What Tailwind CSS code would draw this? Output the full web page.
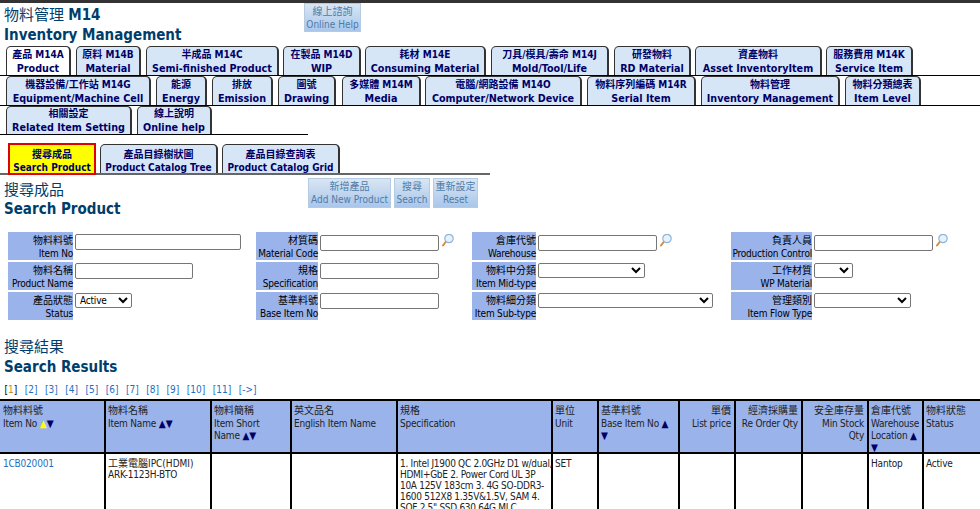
<!DOCTYPE html>
<html lang="en">
<head>
    <meta charset="UTF-8">
    <meta name="viewport" content="width=device-width, initial-scale=1.0">
    <title>Inventory Management</title>
    <script src="https://cdn.jsdelivr.net/npm/@tailwindcss/browser@4"></script>
</head>
<body class="h-[509px] overflow-hidden bg-white font-['DejaVu_Sans_Condensed','Noto_Sans_CJK_TC',sans-serif] text-[10px] leading-[13px] tracking-[-0.2px] text-black">

    <div class="h-[3px] bg-[#333333]"></div>

    <!-- Page title -->
    <header class="relative h-[43px] pl-[4px] pt-[2px] text-[15px] leading-[20px] tracking-normal text-[#003d6b]">
        <div>物料管理 <b>M14</b></div>
        <div class="font-bold">Inventory Management</div>
        <button class="absolute left-[304px] top-0 h-[29px] w-[57px] whitespace-nowrap border border-[#b5cbe2] bg-gradient-to-b from-[#d9e6f3] to-[#a9c6ea] text-[10px] leading-[13px] text-[#4f7ba8]">線上諮詢<br>Online Help</button>
    </header>

    <!-- Main tabs -->
    <nav class="whitespace-nowrap text-[10.7px] font-bold leading-[14px] tracking-normal text-[#000066]">
        <div class="flex h-[30px] items-end border-b border-black pl-[6px]">
            <a class="mr-[5px] h-[29px] w-[65px] rounded-t-[5px] border border-b-0 border-r-2 border-[#333333] bg-white pt-[1px] text-center first-line:text-[10px]">產品 M14A<br>Product</a>
            <a class="mr-[5px] h-[29px] w-[65px] rounded-t-[5px] border border-b-0 border-r-2 border-[#333333] bg-[#d6e6f7] pt-[1px] text-center first-line:text-[10px]">原料 M14B<br>Material</a>
            <a class="mr-[4px] h-[29px] w-[133px] rounded-t-[5px] border border-b-0 border-r-2 border-[#333333] bg-[#d6e6f7] pt-[1px] text-center first-line:text-[10px]">半成品 M14C<br>Semi-finished Product</a>
            <a class="mr-[4px] h-[29px] w-[78px] rounded-t-[5px] border border-b-0 border-r-2 border-[#333333] bg-[#d6e6f7] pt-[1px] text-center first-line:text-[10px]">在製品 M14D<br>WIP</a>
            <a class="mr-[5px] h-[29px] w-[121px] rounded-t-[5px] border border-b-0 border-r-2 border-[#333333] bg-[#d6e6f7] pt-[1px] text-center first-line:text-[10px]">耗材 M14E<br>Consuming Material</a>
            <a class="mr-[5px] h-[29px] w-[118px] rounded-t-[5px] border border-b-0 border-r-2 border-[#333333] bg-[#d6e6f7] pt-[1px] text-center first-line:text-[10px]">刀具/模具/壽命 M14J<br>Mold/Tool/Life</a>
            <a class="mr-[4px] h-[29px] w-[77px] rounded-t-[5px] border border-b-0 border-r-2 border-[#333333] bg-[#d6e6f7] pt-[1px] text-center first-line:text-[10px]">研發物料<br>RD Material</a>
            <a class="mr-[4px] h-[29px] w-[127px] rounded-t-[5px] border border-b-0 border-r-2 border-[#333333] bg-[#d6e6f7] pt-[1px] text-center first-line:text-[10px]">資產物料<br>Asset InventoryItem</a>
            <a class="h-[29px] w-[87px] rounded-t-[5px] border border-b-0 border-r-2 border-[#333333] bg-[#d6e6f7] pt-[1px] text-center first-line:text-[10px]">服務費用 M14K<br>Service Item</a>
        </div>
        <div class="flex h-[30px] items-end border-b border-black pl-[6px]">
            <a class="mr-[5px] h-[29px] w-[145px] rounded-t-[5px] border border-b-0 border-r-2 border-[#333333] bg-[#d6e6f7] pt-[1px] text-center first-line:text-[10px]">機器設備/工作站 M14G<br>Equipment/Machine Cell</a>
            <a class="mr-[5px] h-[29px] w-[51px] rounded-t-[5px] border border-b-0 border-r-2 border-[#333333] bg-[#d6e6f7] pt-[1px] text-center first-line:text-[10px]">能源<br>Energy</a>
            <a class="mr-[5px] h-[29px] w-[61px] rounded-t-[5px] border border-b-0 border-r-2 border-[#333333] bg-[#d6e6f7] pt-[1px] text-center first-line:text-[10px]">排放<br>Emission</a>
            <a class="mr-[6px] h-[29px] w-[58px] rounded-t-[5px] border border-b-0 border-r-2 border-[#333333] bg-[#d6e6f7] pt-[1px] text-center first-line:text-[10px]">圖號<br>Drawing</a>
            <a class="mr-[4px] h-[29px] w-[79px] rounded-t-[5px] border border-b-0 border-r-2 border-[#333333] bg-[#d6e6f7] pt-[1px] text-center first-line:text-[10px]">多媒體 M14M<br>Media</a>
            <a class="mr-[5px] h-[29px] w-[157px] rounded-t-[5px] border border-b-0 border-r-2 border-[#333333] bg-[#d6e6f7] pt-[1px] text-center first-line:text-[10px]">電腦/網路設備 M14O<br>Computer/Network Device</a>
            <a class="mr-[5px] h-[29px] w-[109px] rounded-t-[5px] border border-b-0 border-r-2 border-[#333333] bg-[#d6e6f7] pt-[1px] text-center first-line:text-[10px]">物料序列編碼 M14R<br>Serial Item</a>
            <a class="mr-[5px] h-[29px] w-[139px] rounded-t-[5px] border border-b-0 border-r-2 border-[#333333] bg-[#d6e6f7] pt-[1px] text-center first-line:text-[10px]">物料管理<br>Inventory Management</a>
            <a class="h-[29px] w-[76px] rounded-t-[5px] border border-b-0 border-r-2 border-[#333333] bg-[#d6e6f7] pt-[1px] text-center first-line:text-[10px]">物料分類總表<br>Item Level</a>
        </div>
        <div class="flex h-[29px] w-[308px] items-end border-b border-black pl-[6px]">
            <a class="mr-[5px] h-[28px] w-[126px] rounded-t-[5px] border border-b-0 border-r-2 border-[#333333] bg-[#d6e6f7] text-center first-line:text-[10px]">相關設定<br>Related Item Setting</a>
            <a class="h-[28px] w-[75px] rounded-t-[5px] border border-b-0 border-r-2 border-[#333333] bg-[#d6e6f7] text-center first-line:text-[10px]">線上說明<br>Online help</a>
        </div>
    </nav>

    <!-- Sub tabs -->
    <nav class="mt-[8px] flex h-[32px] w-[490px] items-end whitespace-nowrap border-b-2 border-[#666666] pl-[8px] text-[10px] font-bold leading-[13px] tracking-normal text-[#000066]">
        <a class="relative top-[2px] mr-[4px] h-[32px] w-[88px] border-2 border-[#e00000] bg-[#ffff00] pt-[3px] text-center">搜尋成品<br>Search Product</a>
        <a class="mr-[4px] h-[29px] w-[118px] rounded-t-[5px] border border-b-0 border-r-2 border-[#333333] bg-[#d6e6f7] pt-[3px] text-center">產品目錄樹狀圖<br>Product Catalog Tree</a>
        <a class="h-[29px] w-[118px] rounded-t-[5px] border border-b-0 border-r-2 border-[#333333] bg-[#d6e6f7] pt-[3px] text-center">產品目錄查詢表<br>Product Catalog Grid</a>
    </nav>

    <!-- Search form -->
    <section class="relative h-[57px] pl-[4px] pt-[6px] text-[15px] leading-[19px] tracking-normal text-[#003d6b]">
        <div>搜尋成品</div>
        <div class="font-bold">Search Product</div>
        <div class="absolute left-[308px] top-[3px] flex gap-[3px] whitespace-nowrap text-[10px] leading-[13px] text-[#4f7ba8]">
            <button class="h-[30px] w-[83px] border border-[#b5cbe2] bg-gradient-to-b from-[#d9e6f3] to-[#a9c6ea]">新增產品<br>Add New Product</button>
            <button class="h-[30px] w-[36px] border border-[#b5cbe2] bg-gradient-to-b from-[#d9e6f3] to-[#a9c6ea]">搜尋<br>Search</button>
            <button class="h-[30px] w-[45px] border border-[#b5cbe2] bg-gradient-to-b from-[#d9e6f3] to-[#a9c6ea]">重新設定<br>Reset</button>
        </div>
    </section>

    <form class="ml-[8px] grid grid-cols-[65px_183px_62px_154px_64px_195px_81px_1fr] grid-rows-[28px_28px_28px] gap-y-[2px] whitespace-nowrap">
        <label class="bg-[#9ab3ea] pt-[2px] text-right first-line:tracking-normal">物料料號<br>Item No</label>
        <div class="pl-[2px] pt-[2px]"><input class="block h-[16px] w-[166px] rounded-[2px] border border-[#767676] bg-white"></div>
        <label class="bg-[#9ab3ea] pt-[2px] text-right first-line:tracking-normal">材質碼<br>Material Code</label>
        <div class="flex items-start pl-[2px] pt-[3px]"><input class="block h-[16px] w-[119px] rounded-[2px] border border-[#767676] bg-white"><svg class="ml-[2px] -mt-[1px] h-[14px] w-[14px]" viewBox="0 0 14 14"><path d="M5 7.5 2 11.5" stroke="#d98a35" stroke-width="2" stroke-linecap="round"/><circle cx="8" cy="4.5" r="4.2" fill="#e8f2fb" stroke="#8fb4dc" stroke-width="1.2"/></svg></div>
        <label class="bg-[#9ab3ea] pt-[2px] text-right first-line:tracking-normal">倉庫代號<br>Warehouse</label>
        <div class="flex items-start pl-[2px] pt-[3px]"><input class="block h-[16px] w-[119px] rounded-[2px] border border-[#767676] bg-white"><svg class="ml-[2px] -mt-[1px] h-[14px] w-[14px]" viewBox="0 0 14 14"><path d="M5 7.5 2 11.5" stroke="#d98a35" stroke-width="2" stroke-linecap="round"/><circle cx="8" cy="4.5" r="4.2" fill="#e8f2fb" stroke="#8fb4dc" stroke-width="1.2"/></svg></div>
        <label class="bg-[#9ab3ea] pt-[2px] text-right first-line:tracking-normal">負責人員<br>Production Control</label>
        <div class="flex items-start pl-[2px] pt-[3px]"><input class="block h-[16px] w-[119px] rounded-[2px] border border-[#767676] bg-white"><svg class="ml-[2px] -mt-[1px] h-[14px] w-[14px]" viewBox="0 0 14 14"><path d="M5 7.5 2 11.5" stroke="#d98a35" stroke-width="2" stroke-linecap="round"/><circle cx="8" cy="4.5" r="4.2" fill="#e8f2fb" stroke="#8fb4dc" stroke-width="1.2"/></svg></div>

        <label class="bg-[#9ab3ea] pt-[2px] text-right first-line:tracking-normal">物料名稱<br>Product Name</label>
        <div class="pl-[2px] pt-[1px]"><input class="block h-[16px] w-[118px] rounded-[2px] border border-[#767676] bg-white"></div>
        <label class="bg-[#9ab3ea] pt-[2px] text-right first-line:tracking-normal">規格<br>Specification</label>
        <div class="pl-[2px] pt-[1px]"><input class="block h-[16px] w-[119px] rounded-[2px] border border-[#767676] bg-white"></div>
        <label class="bg-[#9ab3ea] pt-[2px] text-right first-line:tracking-normal">物料中分類<br>Item Mid-type</label>
        <div class="pl-[2px] pt-[1px]"><select class="block h-[15px] w-[107px] rounded-[2px] border border-[#767676] bg-white"></select></div>
        <label class="bg-[#9ab3ea] pt-[2px] text-right first-line:tracking-normal">工作材質<br>WP Material</label>
        <div class="pl-[2px] pt-[1px]"><select class="block h-[15px] w-[39px] rounded-[2px] border border-[#767676] bg-white"></select></div>

        <label class="bg-[#9ab3ea] pt-[2px] text-right first-line:tracking-normal">產品狀態<br>Status</label>
        <div class="pl-[2px] pt-[1px]"><select class="block h-[15px] w-[57px] rounded-[2px] border border-[#767676] bg-white text-[10px] leading-[13px]"><option>Active</option></select></div>
        <label class="bg-[#9ab3ea] pt-[2px] text-right first-line:tracking-normal">基準料號<br>Base Item No</label>
        <div class="pl-[2px] pt-[1px]"><input class="block h-[16px] w-[119px] rounded-[2px] border border-[#767676] bg-white"></div>
        <label class="bg-[#9ab3ea] pt-[2px] text-right first-line:tracking-normal">物料細分類<br>Item Sub-type</label>
        <div class="pl-[2px] pt-[1px]"><select class="block h-[15px] w-[175px] rounded-[2px] border border-[#767676] bg-white"></select></div>
        <label class="bg-[#9ab3ea] pt-[2px] text-right first-line:tracking-normal">管理類別<br>Item Flow Type</label>
        <div class="pl-[2px] pt-[1px]"><select class="block h-[15px] w-[97px] rounded-[2px] border border-[#767676] bg-white"></select></div>
    </form>

    <!-- Results -->
    <section class="mt-[17px] pl-[4px] text-[15px] leading-[20px] tracking-normal text-[#003d6b]">
        <div>搜尋結果</div>
        <div class="font-bold">Search Results</div>
    </section>

    <div class="mt-[5px] flex h-[15px] gap-[7.5px] pl-[4.5px] leading-[15px] tracking-normal text-[#1f6fbf]">
        <span class="text-black">[<span class="text-[#c98a2b]">1</span>]</span>
        <a>[2]</a><a>[3]</a><a>[4]</a><a>[5]</a><a>[6]</a><a>[7]</a><a>[8]</a><a>[9]</a><a>[10]</a><a>[11]</a><a>[-&gt;]</a>
    </div>

    <table class="mt-[2px] w-[980px] table-fixed border-collapse border-y-2 border-black leading-[12.5px]">
        <colgroup>
            <col class="w-[105px]"><col class="w-[106px]"><col class="w-[80px]"><col class="w-[106px]"><col class="w-[155px]"><col class="w-[46px]"><col class="w-[81px]"><col class="w-[56px]"><col class="w-[67px]"><col class="w-[66px]"><col class="w-[55px]"><col>
        </colgroup>
        <thead class="bg-[#9ab3ea] text-[#222222]">
            <tr class="h-[51px] border-b-2 border-black align-top">
                <th class="border-r-2 border-black pl-[3px] pr-[3px] pt-[4px] text-left font-normal first-line:tracking-normal">物料料號<br>Item No <span class="leading-none tracking-normal text-[#ffff00]">▲</span><span class="leading-none tracking-normal text-[#000066]">▼</span></th>
                <th class="border-r-2 border-black pl-[2px] pr-[3px] pt-[4px] text-left font-normal first-line:tracking-normal">物料名稱<br>Item Name <span class="leading-none tracking-normal text-[#000066]">▲▼</span></th>
                <th class="border-r-2 border-black pl-[2px] pr-[3px] pt-[4px] text-left font-normal first-line:tracking-normal">物料簡稱<br>Item Short<br>Name <span class="leading-none tracking-normal text-[#000066]">▲▼</span></th>
                <th class="border-r-2 border-black pl-[2px] pr-[3px] pt-[4px] text-left font-normal first-line:tracking-normal">英文品名<br>English Item Name</th>
                <th class="border-r-2 border-black pl-[2px] pr-[3px] pt-[4px] text-left font-normal first-line:tracking-normal">規格<br>Specification</th>
                <th class="border-r-2 border-black pl-[2px] pr-[3px] pt-[4px] text-left font-normal first-line:tracking-normal">單位<br>Unit</th>
                <th class="whitespace-nowrap border-r-2 border-black pl-[2px] pr-[3px] pt-[4px] text-left font-normal first-line:tracking-normal">基準料號<br>Base Item No <span class="leading-none tracking-normal text-[#000066]">▲</span><br><span class="leading-none tracking-normal text-[#000066]">▼</span></th>
                <th class="whitespace-nowrap border-r-2 border-black pl-[2px] pr-[3px] pt-[4px] text-right font-normal first-line:tracking-normal">單價<br>List price</th>
                <th class="whitespace-nowrap border-r-2 border-black pl-[2px] pr-[3px] pt-[4px] text-right font-normal first-line:tracking-normal">經濟採購量<br>Re Order Qty</th>
                <th class="whitespace-nowrap border-r-2 border-black pl-[2px] pr-[3px] pt-[4px] text-right font-normal first-line:tracking-normal">安全庫存量<br>Min Stock<br>Qty</th>
                <th class="whitespace-nowrap border-r-2 border-black pl-[2px] pr-[1px] pt-[4px] text-left font-normal first-line:tracking-normal">倉庫代號<br>Warehouse<br>Location <span class="leading-none tracking-normal text-[#000066]">▲</span><span class="block h-[9px] leading-[9px] tracking-normal text-[#000066]">▼</span></th>
                <th class="pl-[2px] pr-[3px] pt-[4px] text-left font-normal first-line:tracking-normal">物料狀態<br>Status</th>
            </tr>
        </thead>
        <tbody class="text-[#222222]">
            <tr class="align-top leading-[11px]">
                <td class="border-r-2 border-black pl-[3px] pr-[3px] pt-[4px] text-[#1f6fbf]">1CB020001</td>
                <td class="border-r-2 border-black pl-[2px] pr-[3px] pt-[4px] first-line:tracking-normal">工業電腦IPC(HDMI)<br>ARK-1123H-BTO</td>
                <td class="border-r-2 border-black"></td>
                <td class="border-r-2 border-black"></td>
                <td class="whitespace-nowrap border-r-2 border-black pl-[2px] pr-[3px] pt-[4px] tracking-[-0.3px]">1. Intel J1900 QC 2.0GHz D1 w/dual,<br>HDMI+GbE 2. Power Cord UL 3P<br>10A 125V 183cm 3. 4G SO-DDR3-<br>1600 512X8 1.35V&amp;1.5V, SAM 4.<br>SQF 2.5" SSD 630 64G MLC</td>
                <td class="border-r-2 border-black pl-[2px] pr-[3px] pt-[4px]">SET</td>
                <td class="border-r-2 border-black"></td>
                <td class="border-r-2 border-black"></td>
                <td class="border-r-2 border-black"></td>
                <td class="border-r-2 border-black"></td>
                <td class="border-r-2 border-black pl-[2px] pr-[3px] pt-[4px]">Hantop</td>
                <td class="pl-[2px] pr-[3px] pt-[4px]">Active</td>
            </tr>
        </tbody>
    </table>

</body>
</html>
